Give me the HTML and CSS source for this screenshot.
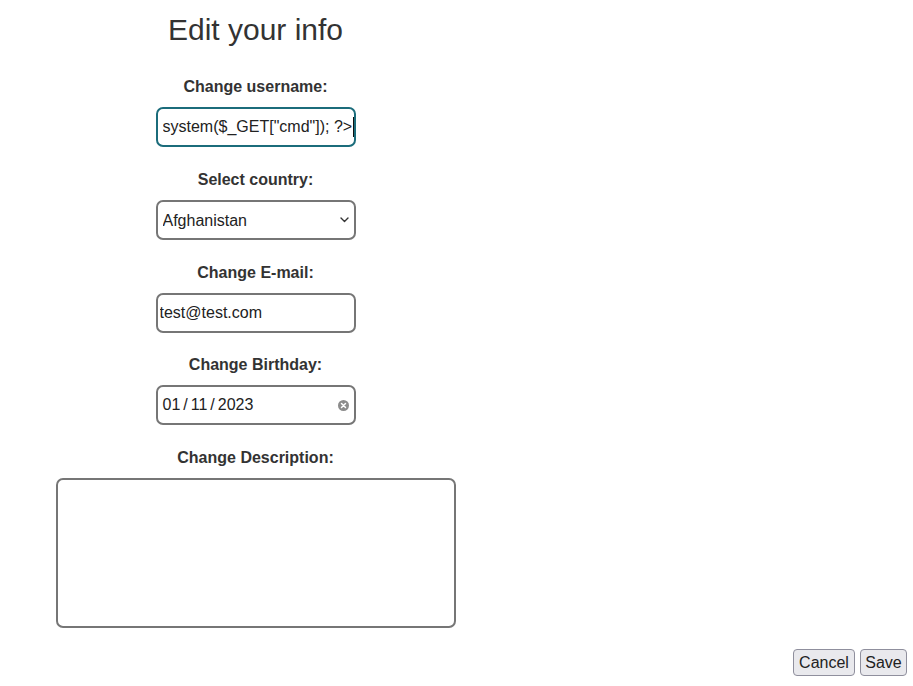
FILE: index.html
```html
<!DOCTYPE html>
<html lang="en">
<head>
<meta charset="utf-8">
<title>Edit your info</title>
<link rel="stylesheet" href="styles.css">
</head>
<body>
<main class="page">
  <form class="edit-form">
    <h1 class="title">Edit your info</h1>

    <div class="field">
      <label class="field-label" for="username">Change username:</label>
      <div class="input-wrap">
        <input class="control control-focused username-input" id="username" type="text" value="system($_GET[&quot;cmd&quot;]); ?&gt;">
        <span class="caret"></span>
      </div>
    </div>

    <div class="field">
      <label class="field-label" for="country">Select country:</label>
      <div class="input-wrap">
        <select class="control select-control" id="country">
          <option>Afghanistan</option>
          <option>Albania</option>
          <option>Algeria</option>
        </select>
        <svg class="chevron" width="9" height="6" viewBox="0 0 9 6"><path d="M1 1 L4.5 4.5 L8 1" fill="none" stroke="#333" stroke-width="1.4" stroke-linecap="round" stroke-linejoin="round"/></svg>
      </div>
    </div>

    <div class="field">
      <label class="field-label" for="email">Change E-mail:</label>
      <div class="input-wrap">
        <input class="control email-input" id="email" type="text" value="test@test.com">
      </div>
    </div>

    <div class="field field-birthday">
      <label class="field-label">Change Birthday:</label>
      <div class="control date-control">
        <span class="date-text">01<span class="sep">/</span>11<span class="sep">/</span>2023</span>
        <span class="clear-icon">
          <svg width="11" height="11" viewBox="0 0 11 11"><circle cx="5.5" cy="5.5" r="5.5" fill="#8c8c8c"/><path d="M3.5 3.5 L7.5 7.5 M7.5 3.5 L3.5 7.5" stroke="#fff" stroke-width="1.5" stroke-linecap="round"/></svg>
        </span>
      </div>
    </div>

    <div class="field">
      <label class="field-label" for="desc">Change Description:</label>
      <textarea class="control textarea-control" id="desc"></textarea>
    </div>
  </form>

  <div class="actions">
    <button class="btn btn-cancel" type="button">Cancel</button>
    <button class="btn btn-save" type="button">Save</button>
  </div>
</main>
</body>
</html>
```

FILE: styles.css
```css
html, body {
  margin: 0;
  padding: 0;
  background: #ffffff;
}

body {
  font-family: "Liberation Sans", Arial, sans-serif;
  color: #333333;
}

.page {
  width: 913px;
  height: 686px;
  display: flex;
  flex-direction: column;
}

.edit-form {
  width: 511px;
  display: flex;
  flex-direction: column;
  align-items: center;
}

.title {
  margin: 13px 0 0 0;
  font-size: 30px;
  font-weight: normal;
  line-height: 34px;
  color: #333333;
}

.field {
  display: flex;
  flex-direction: column;
  align-items: center;
}

.title + .field {
  margin-top: 30px;
}

.field + .field {
  margin-top: 23px;
}

.field + .field-birthday {
  margin-top: 22px;
}

.field-label {
  display: block;
  font-size: 16px;
  font-weight: bold;
  line-height: 20px;
  margin-bottom: 10px;
  color: #333333;
}

.control {
  box-sizing: border-box;
  display: block;
  width: 200px;
  height: 40px;
  border: 2px solid #767676;
  border-radius: 7px;
  background: #ffffff;
  font-family: "Liberation Sans", Arial, sans-serif;
  font-size: 16px;
  color: #222222;
  outline: none;
  margin: 0;
}

.input-wrap {
  position: relative;
  width: 200px;
  height: 40px;
}

.control-focused {
  border-color: #1b6c7b;
}

.username-input {
  padding: 0 0 0 5px;
}

.caret {
  position: absolute;
  left: 197px;
  top: 10px;
  width: 1px;
  height: 20px;
  background: #111111;
}

.email-input {
  padding: 0 2px;
}

.select-control {
  -webkit-appearance: none;
  appearance: none;
  padding: 0 0 0 5px;
}

.chevron {
  position: absolute;
  right: 7px;
  top: 17px;
  pointer-events: none;
}

.date-control {
  display: flex;
  align-items: center;
  justify-content: space-between;
  padding: 0 5px 0 5px;
}

.date-text {
  font-size: 16px;
  color: #222222;
}

.sep {
  margin: 0 3px;
}

.clear-icon {
  display: flex;
  width: 11px;
  height: 11px;
}

.textarea-control {
  width: 400px;
  height: 150px;
  resize: none;
}

.actions {
  display: flex;
  justify-content: flex-end;
  gap: 5px;
  margin-top: 21px;
  padding-right: 6px;
}

.btn {
  box-sizing: border-box;
  height: 27px;
  padding: 0;
  border: 1px solid #8f8f9d;
  border-radius: 4px;
  background: #e9e9ed;
  font-family: "Liberation Sans", Arial, sans-serif;
  font-size: 16px;
  color: #222222;
  text-align: center;
}

.btn-cancel {
  width: 62px;
}

.btn-save {
  width: 47px;
}
```
